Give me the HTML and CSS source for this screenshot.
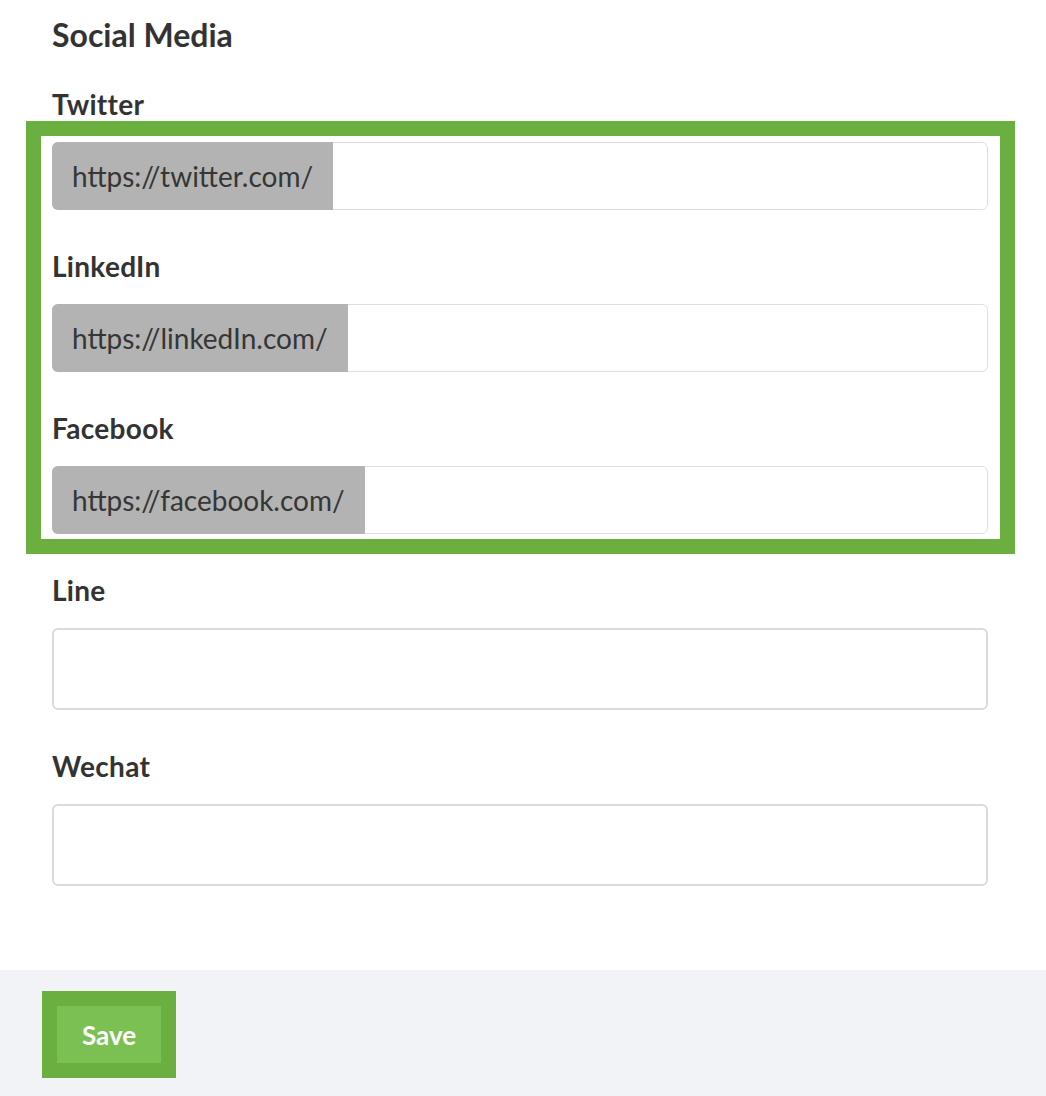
FILE: index.html
```html
<!DOCTYPE html>
<html lang="en">
<head>
<meta charset="utf-8">
<title>Social Media</title>
<link rel="stylesheet" href="styles.css">
</head>
<body>
<div class="page">
  <h2 class="title">Social Media</h2>

  <div class="field">
    <label class="label">Twitter</label>
    <div class="highlight">
      <div class="input-group">
        <span class="addon">https://twitter.com/</span>
        <input class="input-main" type="text">
      </div>
      <label class="label label-inner">LinkedIn</label>
      <div class="input-group">
        <span class="addon">https://linkedIn.com/</span>
        <input class="input-main" type="text">
      </div>
      <label class="label label-inner">Facebook</label>
      <div class="input-group">
        <span class="addon">https://facebook.com/</span>
        <input class="input-main" type="text">
      </div>
      <div class="highlight-frame"></div>
    </div>
  </div>

  <div class="field">
    <label class="label">Line</label>
    <input class="input-plain" type="text">
  </div>

  <div class="field">
    <label class="label">Wechat</label>
    <input class="input-plain" type="text">
  </div>
</div>

<div class="footer">
  <button class="save" type="button">Save</button>
</div>
</body>
</html>
```

FILE: styles.css
```css
* {
  box-sizing: border-box;
}

html, body {
  margin: 0;
  padding: 0;
  background: #ffffff;
  font-family: Lato, "Open Sans", "Liberation Sans", sans-serif;
  color: #333333;
}

.page {
  padding: 17px 58px 84px 52px;
}

.title {
  margin: 0 0 37px 0;
  font-size: 32px;
  line-height: 36px;
  font-weight: 700;
  color: #333333;
}

.field {
  margin-bottom: 42px;
}

.field:last-child {
  margin-bottom: 0;
}

.label {
  display: block;
  font-size: 28px;
  line-height: 29px;
  font-weight: 700;
  letter-spacing: 0.3px;
  color: #333333;
  margin-bottom: 23px;
}

.label-inner {
  margin-top: 42px;
}

.highlight {
  position: relative;
}

.highlight-frame {
  position: absolute;
  top: -21px;
  left: -26px;
  right: -27px;
  bottom: -20px;
  border: 15px solid #6aaf3f;
  pointer-events: none;
}

.input-group {
  display: flex;
  height: 68px;
  border: 1px solid #dcdfe6;
  border-radius: 6px;
  background: #ffffff;
}

.addon {
  display: flex;
  align-items: center;
  margin: -1px 0 -1px -1px;
  padding: 0 20px;
  background: #b3b3b3;
  border-radius: 6px 0 0 6px;
  font-size: 28px;
  color: #363636;
  white-space: nowrap;
}

.input-main {
  flex: 1;
  min-width: 0;
  border: none;
  background: transparent;
  outline: none;
  font: inherit;
}

.input-plain {
  display: block;
  width: 100%;
  height: 82px;
  border: 2px solid #dadada;
  border-radius: 6px;
  background: #ffffff;
  font: inherit;
  outline: none;
}

.footer {
  background: #f2f3f7;
  height: 126px;
  padding: 36px 0 0 57px;
}

.save {
  display: block;
  width: 104px;
  height: 57px;
  border: none;
  background: #7bc052;
  outline: 15px solid #6aaf3f;
  color: #ffffff;
  font-family: Lato, "Open Sans", "Liberation Sans", sans-serif;
  font-size: 26px;
  font-weight: 700;
  padding: 0;
  cursor: pointer;
}
```
